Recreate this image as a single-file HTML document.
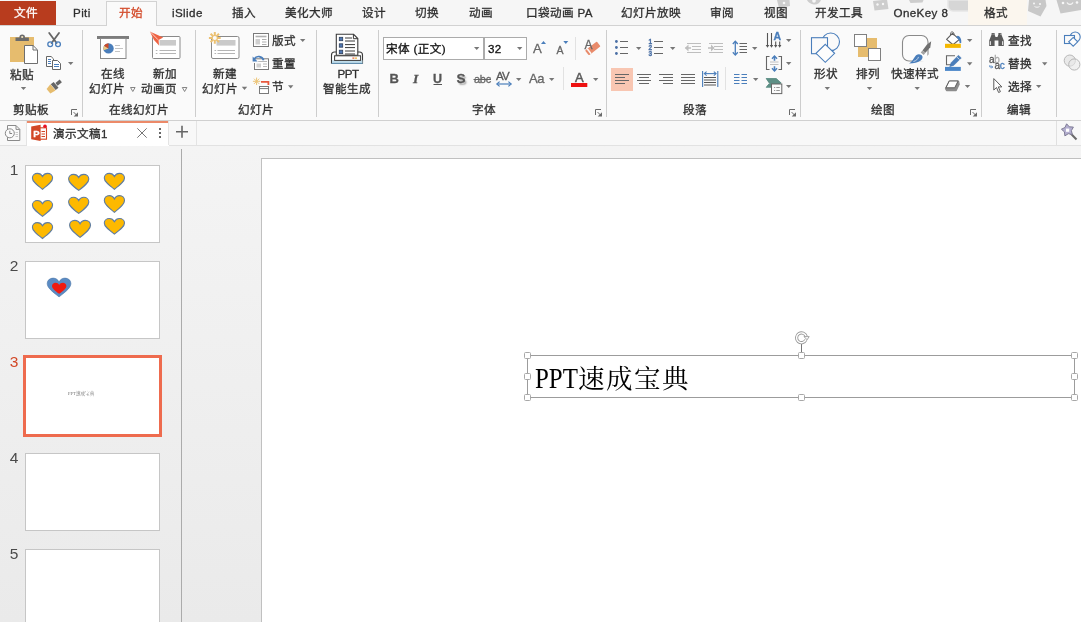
<!DOCTYPE html>
<html lang="zh-CN">
<head>
<meta charset="utf-8">
<title>演示文稿1 - PowerPoint</title>
<style>
*{box-sizing:border-box;margin:0;padding:0}
html,body{width:1081px;height:622px;overflow:hidden}
body{position:relative;font-family:"Liberation Sans","Noto Sans CJK SC",sans-serif;font-size:12px;color:#444;background:#efefef}
.a{position:absolute}
.t{position:absolute;white-space:nowrap;line-height:16px;height:16px;font-size:11.600px;letter-spacing:0.400px;color:#2e2e2e;-webkit-text-stroke:0.300px}
.vs{position:absolute;width:1px;background:#cdcdcd;top:30px;height:87px}
svg{position:absolute;overflow:visible}
#tabs,#rib,#docbar,#thumbs,#tbt{will-change:transform}
#tabs{left:0;top:0;width:1081px;height:26px;background:#f6f6f6;border-bottom:1px solid #d2d2d2;overflow:hidden}
#ribbon{left:0;top:26px;width:1081px;height:95px;background:#fafafa;border-bottom:1px solid #d0d0d0}
#docbar{left:0;top:121px;width:1081px;height:25px;background:#f8f8f8;border-bottom:1px solid #e2e2e2}
#work{left:0;top:146px;width:1081px;height:476px;background:linear-gradient(#f4f4f4,#eaeaea)}
.th{position:absolute;left:25px;width:135px;height:78px;background:#fff;border:1px solid #c6c6c6}
.num{position:absolute;left:8px;width:12px;text-align:center;font-size:15.500px;line-height:16px;color:#4a4a4a}
.h{position:absolute;width:7px;height:7px;background:#fff;border:1px solid #a8a8a8;border-radius:1.5px}
</style>
</head>
<body>
<!-- ================= TAB ROW ================= -->
<div id="tabs" class="a">
  <div id="doodles"><svg width="320" height="25" viewBox="770 0 320 25" style="left:770px;top:0">
    <g fill="#cdcdcd">
      <path d="M777 0h12.500l0.500 6l-11 2z"/>
      <path d="M807 0h14c-1 3-4 5-7 4.500s-6-2-7-4.500z"/>
      <path d="M873 1l14-1.500l1.500 9.500l-14 1.500z"/>
      <path d="M909 0h14.500l-1 2.500l-12 0.500z"/>
      <path d="M948 0h24v11h-19a5 5 0 0 1-5-5z" fill="#d6d6d6" stroke="#e6e6e6" stroke-width="1.500"/>
      <path d="M1029 0h16.500l1 6l-6 10.500l-12.500-5.500z" fill="#c8c8c8"/>
      <path d="M1056.500 0h25v10l-21 3.500z" fill="#c8c8c8"/>
    </g>
    <g fill="#f7f7f7">
      <circle cx="784" cy="3" r="1.300"/><circle cx="814" cy="1" r="1.800"/>
      <circle cx="877.500" cy="4.500" r="1.200"/><circle cx="883" cy="4" r="1.200"/>
      <circle cx="1034" cy="3.500" r="1"/><circle cx="1040" cy="4" r="1"/>
      <circle cx="1063" cy="3" r="1.300"/><circle cx="1077" cy="2.500" r="1.300"/>
    </g>
    <path d="M1067 2.500c1.500 2.500 4.500 2.500 6 0" fill="none" stroke="#f7f7f7" stroke-width="1.300"/>
    <path d="M1034.500 6.500c1.500 1 3.500 1 5 0" fill="none" stroke="#f7f7f7" stroke-width="0.900"/>
  </svg></div>
  <div class="a" style="left:0;top:1px;width:56px;height:25px;background:#b83c1e"></div>
  <span class="t" style="left:14px;top:5px;color:#fff">文件</span>
  <span class="t" style="left:73px;top:5px">Piti</span>
  <span class="t" style="left:172px;top:5px">iSlide</span>
  <span class="t" style="left:232px;top:5px">插入</span>
  <span class="t" style="left:285px;top:5px">美化大师</span>
  <span class="t" style="left:362px;top:5px">设计</span>
  <span class="t" style="left:415px;top:5px">切换</span>
  <span class="t" style="left:469px;top:5px">动画</span>
  <span class="t" style="left:526px;top:5px">口袋动画 PA</span>
  <span class="t" style="left:621px;top:5px">幻灯片放映</span>
  <span class="t" style="left:710px;top:5px">审阅</span>
  <span class="t" style="left:764px;top:5px">视图</span>
  <span class="t" style="left:815px;top:5px">开发工具</span>
  <span class="t" style="left:893.5px;top:5px">OneKey 8</span>
  <div class="a" style="left:968px;top:0;width:59px;height:25px;background:#fbf6ee"></div>
  <span class="t" style="left:984px;top:5px">格式</span>
</div>
<div class="a" style="left:106px;top:1px;width:51px;height:26px;background:#fafafa;border:1px solid #d2d2d2;border-bottom:none"></div>
<span class="t" style="left:119px;top:5px;color:#d24726;will-change:transform">开始</span>

<!-- ================= RIBBON ================= -->
<div id="ribbon" class="a"></div>
<div id="rib" class="a" style="left:0;top:0;width:1081px;height:121px">
  <div class="a" style="left:383px;top:37px;width:101px;height:23px;background:#fff;border:1px solid #ababab"></div>
  <div class="a" style="left:484px;top:37px;width:43px;height:23px;background:#fff;border:1px solid #ababab"></div>
  <div class="a" style="left:611px;top:68px;width:22px;height:23px;background:#f8c6b2"></div>

<svg id="ico1" width="400" height="121" viewBox="0 0 400 121" style="left:0;top:0">
  <path d="M20.8 87h5.4l-2.700 3.100z" fill="#777"/><path d="M68 62h5.4l-2.700 3.100z" fill="#777"/><path d="M241.8 86.8h5.4l-2.700 3.100z" fill="#777"/><path d="M300 39h5.4l-2.700 3.100z" fill="#777"/><path d="M288 85.3h5.4l-2.700 3.100z" fill="#777"/>
  <!-- paste -->
  <rect x="10" y="37" width="24" height="25" fill="#e6bc6e"/>
  <path d="M15.5 41v-3.6h3.9a2.8 2.8 0 0 1 5.6 0h3.9V41z" fill="#6b6b6b"/>
  <circle cx="22.2" cy="37" r="1.1" fill="#f4e3bf"/>
  <path d="M24.5 45.5h8.6l4.4 4.4v13.6h-13z" fill="#fff" stroke="#6f6f6f"/>
  <path d="M33 45.6v4.4h4.4" fill="none" stroke="#6f6f6f"/>
  <!-- scissors -->
  <path d="M49.200 33l7.400 10M59 33l-7.400 10" stroke="#666" stroke-width="1.800" fill="none" stroke-linecap="round"/>
  <circle cx="50.200" cy="44.200" r="2.400" fill="none" stroke="#4a7ebb" stroke-width="1.300"/>
  <circle cx="58" cy="44.200" r="2.400" fill="none" stroke="#4a7ebb" stroke-width="1.300"/>
  <!-- copy -->
  <path d="M46.5 56.5h4.6l2.4 2.4v7.6h-7z" fill="#fff" stroke="#666"/>
  <path d="M52.5 60.5h5l3 3v6h-8z" fill="#fff" stroke="#666"/>
  <path d="M48 59.5h3M48 61.5h3M48 63.5h3M54 64.5h5M54 66.5h5" stroke="#4a7ebb" stroke-width="1"/>
  <!-- format painter -->
  <g transform="translate(55 85.700) rotate(-40) scale(0.900)">
    <path d="M-9.5 -3.2l6.5 -1.3v9l-6.5 -1.3z" fill="#e6bc6e"/>
    <rect x="-2.6" y="-4.2" width="4.2" height="8.4" fill="#666"/>
    <rect x="2.2" y="-1.9" width="6.2" height="3.8" fill="#666"/>
  </g>
  <!-- dialog launcher clipboard -->
  <path d="M71.5 115v-5.500h5.500" fill="none" stroke="#6a6a6a" stroke-width="1"/><path d="M73.6 112.100l3 3" stroke="#6a6a6a" stroke-width="1"/><path d="M78 112.200v4.300h-4.300z" fill="#6a6a6a"/>

  <!-- online slides icon -->
  <rect x="97" y="36" width="32" height="3" fill="#7c7c7c"/>
  <rect x="100.5" y="38.5" width="25.5" height="20" fill="#fff" stroke="#8a8a8a"/>
  <circle cx="108.5" cy="48.4" r="5.2" fill="#4a7ebb"/>
  <path d="M108.5 48.4L103.6 50.2A5.2 5.2 0 0 1 104 45.8z" fill="#f0c981"/>
  <path d="M108.5 48.4L104 45.8A5.2 5.2 0 0 1 108.5 43.2z" fill="#d04a27"/>
  <path d="M115 45.5h5M115 48.5h8M115 51.5h5" stroke="#c4c4c4" stroke-width="1"/>
  <path d="M130.5 87.5h4.6l-2.3 4z" fill="none" stroke="#777" stroke-width="0.9"/>
  <!-- new animation page icon -->
  <rect x="152.5" y="36.5" width="27.5" height="22" rx="1" fill="#fff" stroke="#8a8a8a"/>
  <rect x="159.5" y="40" width="16.5" height="5.6" fill="#cacaca"/>
  <path d="M159.5 50.5h16.5M159.5 53.5h16.5M155.8 50.5h1.6M155.8 53.5h1.6" stroke="#b5b5b5" stroke-width="1"/>
  <path d="M149.800 31.400L163.200 37.600L158.600 40L159 45.400L154 40z" fill="#ee6242"/>
  <path d="M149.8 31.4l8.2 8.3" stroke="#fff" stroke-width="0.7"/>
  <path d="M182.3 87.5h4.6l-2.3 4z" fill="none" stroke="#777" stroke-width="0.9"/>

  <!-- new slide icon -->
  <rect x="211.5" y="36.5" width="27.5" height="22" rx="1.5" fill="#fff" stroke="#8a8a8a"/>
  <rect x="216.5" y="40" width="19" height="5.6" fill="#cacaca"/>
  <path d="M217.5 50.5h17.5M217.5 53.5h17.5M214.5 50.5h1.6M214.5 53.5h1.6" stroke="#b5b5b5" stroke-width="1"/>
  <g stroke="#ecc172" stroke-width="2" stroke-linecap="butt">
    <path d="M214.8 32v11.8M208.9 37.9h11.8M210.6 33.7l8.4 8.4M219 33.7l-8.4 8.4"/>
  </g>
  <circle cx="214.8" cy="37.9" r="2" fill="#fafafa"/>
  <!-- layout icon -->
  <rect x="253.5" y="33.5" width="15" height="13" fill="#fff" stroke="#7a7a7a"/>
  <path d="M255.5 36.5h11" stroke="#b0b0b0" stroke-width="1.6"/>
  <rect x="255.5" y="39" width="4.5" height="5.5" fill="#cfcfcf"/>
  <path d="M262 39.500h4.500M262 42h4.500M262 44.500h4.500" stroke="#9a9a9a" stroke-width="0.800"/>
  <!-- reset icon -->
  <rect x="254.5" y="58.8" width="14" height="10.7" fill="#fff" stroke="#7a7a7a"/>
  <rect x="256.5" y="63.5" width="4.5" height="4" fill="#cfcfcf"/>
  <path d="M263 64h4M263 66.5h4M258 61.5h9" stroke="#b0b0b0" stroke-width="0.9"/>
  <path d="M252.6 56v5.6h5.6" fill="none" stroke="#fafafa" stroke-width="3"/>
  <path d="M263.6 60.2a5.2 5.2 0 0 0 -9.4 -1.2" fill="none" stroke="#4a7ebb" stroke-width="1.7"/>
  <path d="M252.6 56.4v5h5z" fill="#4a7ebb"/>
  <!-- section icon -->
  <g stroke="#ecc476" stroke-width="1" >
    <path d="M256.6 77.6v7.4M252.9 81.3h7.4M254 78.7l5.2 5.2M259.2 78.7l-5.2 5.2"/>
  </g>
  <path d="M261 81.8h7.4v3.2" fill="none" stroke="#e8573c" stroke-width="1.8"/>
  <rect x="259.5" y="86.5" width="9" height="7" fill="#fff" stroke="#7a7a7a"/>
  <path d="M260 88.6h8" stroke="#7a7a7a" stroke-width="1"/>

  <!-- PPT AI icon -->
  <path d="M331.5 63.2v-8.2a3 3 0 0 1 3 -3h25a3 3 0 0 1 3 3v8.2z" fill="#fff" stroke="#3a3a3a" stroke-width="1.1"/>
  <path d="M332 60.3h30.5v3h-30.5z" fill="#bfdcea"/>
  <path d="M331.5 63.4h31" stroke="#5f8fb0" stroke-width="1"/>
  <path d="M336.3 55.3v-21h17.3l4.2 4.2v16.8z" fill="#fff" stroke="#3a3a3a" stroke-width="1.1"/>
  <path d="M353.4 34.4v4.3h4.3" fill="none" stroke="#3a3a3a" stroke-width="1"/>
  <rect x="334.6" y="55.8" width="26" height="4.6" fill="#fff" stroke="#3a3a3a" stroke-width="1"/>
  <rect x="339.3" y="37.3" width="3.4" height="3.4" fill="#4f78b3" stroke="#2e3f5c" stroke-width="0.8"/>
  <rect x="339.3" y="43.8" width="3.4" height="3.4" fill="#4f78b3" stroke="#2e3f5c" stroke-width="0.8"/>
  <rect x="339.3" y="50.2" width="3.4" height="3.4" fill="#4f78b3" stroke="#2e3f5c" stroke-width="0.8"/>
  <path d="M345 38h7M345 41h10M345 44.6h10M345 47.6h10M345 51h10M345 54h10" stroke="#3a3a3a" stroke-width="1"/>
  <path d="M352.4 58.1h2" stroke="#e9663a" stroke-width="1.3"/>
  <path d="M355 58.1h2" stroke="#f0b93a" stroke-width="1.3"/>
</svg>

<svg id="ico2" width="1081" height="121" viewBox="0 0 1081 121" style="left:0;top:0">
  <!-- font combos arrows -->
  <path d="M474 47h5.4l-2.7 3.1z" fill="#777"/><path d="M517 47h5.4l-2.7 3.1z" fill="#777"/>
  <!-- grow / shrink triangles -->
  <path d="M541 43.9l2.5-3l2.5 3z" fill="#4a7ebb"/>
  <path d="M563.3 41h5l-2.5 3z" fill="#4a7ebb"/>
  <!-- small separators -->
  <path d="M575.5 37v23M563.5 67v23M725.5 67v23" stroke="#e2e2e2" stroke-width="1"/>
  <!-- clear formatting eraser -->
  <g transform="translate(592.800 48.400) rotate(-38)">
    <rect x="-7.400" y="-3.100" width="14.800" height="6.200" rx="0.800" fill="#e98b6b"/>
    <rect x="-5.400" y="-3.100" width="1.500" height="6.200" fill="#fafafa"/>
  </g>
  <!-- strike for abc, underline for U, AV arrows -->
  <path d="M473.5 79.5h17.5" stroke="#666" stroke-width="1"/>
  <path d="M433.5 84.5h8.5" stroke="#555" stroke-width="1"/>
  <path d="M497.5 84h13" stroke="#4a7ebb" stroke-width="1.2"/>
  <path d="M499.6 81.6l-2.8 2.4l2.8 2.4M508.4 81.6l2.8 2.4l-2.8 2.4" fill="none" stroke="#4a7ebb" stroke-width="1.2"/>
  <path d="M516 78h5.4l-2.7 3.1z" fill="#777"/><path d="M549 78h5.4l-2.7 3.1z" fill="#777"/><path d="M593 78h5.4l-2.7 3.1z" fill="#777"/>
  <!-- font colour bar -->
  <rect x="571" y="83" width="16.3" height="4" fill="#ee1111"/>
  <!-- dialog launchers -->
  <path d="M595.5 115v-5.500h5.500" fill="none" stroke="#6a6a6a" stroke-width="1"/><path d="M597.6 112.100l3 3" stroke="#6a6a6a" stroke-width="1"/><path d="M602 112.200v4.300h-4.300z" fill="#6a6a6a"/>
  <path d="M789.5 115v-5.500h5.500" fill="none" stroke="#6a6a6a" stroke-width="1"/><path d="M791.6 112.100l3 3" stroke="#6a6a6a" stroke-width="1"/><path d="M796 112.200v4.300h-4.300z" fill="#6a6a6a"/>
  <path d="M970.5 115v-5.500h5.500" fill="none" stroke="#6a6a6a" stroke-width="1"/><path d="M972.6 112.100l3 3" stroke="#6a6a6a" stroke-width="1"/><path d="M977 112.200v4.300h-4.300z" fill="#6a6a6a"/>

  <!-- bullets -->
  <g fill="#4a6fa5"><circle cx="616.4" cy="41.5" r="1.4"/><circle cx="616.4" cy="47.5" r="1.4"/><circle cx="616.4" cy="53.5" r="1.4"/></g>
  <path d="M620 41.5h8M620 47.5h8M620 53.5h8" stroke="#666" stroke-width="1.1"/>
  <path d="M636 47h5.4l-2.7 3.1z" fill="#777"/>
  <!-- numbering lines -->
  <path d="M654 41.5h9M654 47.5h9M654 53.5h9" stroke="#666" stroke-width="1.1"/>
  <path d="M670 47h5.4l-2.7 3.1z" fill="#777"/>
  <!-- decrease / increase indent (disabled) -->
  <g stroke="#bebebe" stroke-width="1.100" fill="none">
    <path d="M687 43.5h14M692 46.5h9M692 49.5h9M687 52.5h14"/>
    <path d="M709 43.5h14M714 46.5h9M714 49.5h9M709 52.5h14"/>
    <path d="M685.5 48h5.5M708 48h5.5" stroke-width="1.4"/>
  </g>
  <path d="M688.500 44.600l-3.700 3.400l3.700 3.400z" fill="#bebebe"/>
  <path d="M711 44.600l3.700 3.400l-3.700 3.400z" fill="#bebebe"/>
  <!-- line spacing -->
  <path d="M735.3 41.8v12.600" stroke="#4a7ebb" stroke-width="1.3"/>
  <path d="M732.8 44l2.500-2.800l2.500 2.800M732.800 52.300l2.500 2.800l2.500-2.800" fill="none" stroke="#4a7ebb" stroke-width="1.3"/>
  <path d="M739.5 43.5h7.5M739.5 46.5h7.5M739.5 49.5h7.5M739.5 52.5h7.5" stroke="#666" stroke-width="1.1"/>
  <path d="M752 47h5.4l-2.7 3.1z" fill="#777"/>
  <!-- align buttons -->
  <g stroke="#666" stroke-width="1.1">
    <path d="M615 74.5h14M615 77.5h10M615 80.5h14M615 83.5h10"/>
    <path d="M637 74.5h14M639 77.5h10M637 80.5h14M639 83.5h10"/>
    <path d="M659 74.5h14M663 77.5h10M659 80.5h14M663 83.5h10"/>
    <path d="M681 74.5h14M681 77.5h14M681 80.5h14M681 83.5h14"/>
    <path d="M704 77.500h12M704 80h12M704 82.500h12M704 85h12" stroke="#555" stroke-width="1.200"/>
  </g>
  <path d="M702.6 71v16M717.8 71v16" stroke="#4a7ebb" stroke-width="1.1"/>
  <path d="M704.5 73.6h11.5" stroke="#4a7ebb" stroke-width="1.1"/>
  <path d="M706.6 71.6l-2.3 2l2.3 2M713.8 71.600l2.300 2l-2.300 2" fill="none" stroke="#4a7ebb" stroke-width="1.1"/>
  <!-- columns -->
  <path d="M734 74.500h5.500M734 77.500h5.500M734 80.500h5.500M734 83.500h5.500M741.500 74.500h5.500M741.500 77.500h5.500M741.500 80.500h5.500M741.500 83.500h5.500" stroke="#4a7ebb" stroke-width="1.1"/>
  <path d="M753 78h5.4l-2.7 3.1z" fill="#777"/>
  <!-- text direction -->
  <path d="M767.500 33v13M771.500 33v13M775.700 41.500v4.500M779.700 41.500v4.500" stroke="#555" stroke-width="1.1"/>
  <path d="M765.700 45l1.800 2.800l1.800-2.800zM769.700 45l1.800 2.800l1.800-2.800zM774 45l1.700 2.800l1.700-2.800zM778 45l1.700 2.800l1.700-2.800z" fill="#555"/>
  <path d="M786 39h5.4l-2.7 3.1z" fill="#777"/>
  <!-- align text -->
  <path d="M769.500 56.500h-3v13h3M778.500 56.500h3v13h-3" fill="none" stroke="#666" stroke-width="1.1"/>
  <path d="M770 62h8.500M770 64.500h8.500" stroke="#b9b9b9" stroke-width="0.9"/>
  <path d="M774.500 56.500v4.300M774.500 66.200v4.300" stroke="#4a7ebb" stroke-width="1.600"/>
  <path d="M772 58.700l2.500-2.700l2.500 2.700M772 68.300l2.500 2.700l2.500-2.700" fill="none" stroke="#4a7ebb" stroke-width="1.500"/>
  <path d="M786 62h5.4l-2.7 3.1z" fill="#777"/>
  <!-- smartart -->
  <path d="M765.700 78.200h10.500l5.300 4.800h-12l-3.800 4.600h5.300v-1z" fill="#5d8f85"/>
  <path d="M765.700 78.200h10.500l5.200 4.700l-5.200 4.700h-10.500l4 -4.700z" fill="#5d8f85"/>
  <rect x="771.500" y="84" width="10.300" height="9.600" fill="#fafafa" stroke="#666" stroke-width="1"/>
  <path d="M774 87.500h1.200M776.300 87.500h3.500M774 90.500h1.200M776.300 90.500h3.500" stroke="#8a8a8a" stroke-width="0.9"/>
  <path d="M786 85h5.4l-2.7 3.1z" fill="#777"/>

  <!-- shapes big icon -->
  <circle cx="830.700" cy="41.800" r="8.800" fill="none" stroke="#4a7ebb" stroke-width="1.1"/>
  <rect x="811.500" y="37.700" width="16" height="16" fill="#fafafa" stroke="#4a7ebb" stroke-width="1.100"/>
  <path d="M825.300 44.300l9.300 9l-9.300 9l-9.300-9z" fill="#fdfdfd" stroke="#4a7ebb" stroke-width="1.100"/>
  <path d="M824.6 87h5.4l-2.7 3.1z" fill="#777"/>
  <!-- arrange -->
  <path d="M867 38h10v12h-8v7h-11v-10h9z" fill="#e6bc6e"/>
  <rect x="854.500" y="34.500" width="12" height="12" fill="#fff" stroke="#808080"/>
  <rect x="868.500" y="48.500" width="12" height="12" fill="#fff" stroke="#808080"/>
  <path d="M866.8 87h5.4l-2.7 3.1z" fill="#777"/>
  <!-- quick styles -->
  <rect x="902.500" y="35.500" width="25.500" height="25.500" rx="6.500" fill="#fcfcfc" stroke="#8a8a8a" stroke-width="1.1"/>
  <path d="M918 61.800h12v-8z" fill="#fafafa"/>
  <path d="M931.200 41.200L930.300 47.200L925.500 52.800L922.500 50.400L926.800 44.800z" fill="#707070"/>
  <path d="M922.500 50.400L925.500 52.800L923.700 55L920.700 52.600z" fill="#a2a2a2"/>
  <path d="M922.400 56.200c1 3.300-3.200 7-13.300 7.300c4-2.200 4.600-6 7-8.200c2.200-1.700 5-1.200 6.300 0.900z" fill="#4a7ebb"/>
  <path d="M913.500 61.500c2.800-0.800 4.400-2.400 5-4.600" fill="none" stroke="#dfe9f5" stroke-width="0.800"/>
  <path d="M914.500 87h5.400l-2.700 3.100z" fill="#777"/>
  <!-- shape fill -->
  <path d="M952.400 33.400l7 6l-6.400 5.400l-6.400-5.400z" fill="#fff" stroke="#606060" stroke-width="1.200" stroke-linejoin="round"/>
  <path d="M950.600 35c-0.600-2.200 0.600-3.300 1.800-3.100s1.800 1.500 1.600 3.500" fill="none" stroke="#606060" stroke-width="1"/>
  <path d="M957.600 35.800c2.600 0.600 4.200 3.400 3.600 7.200l-1.600 0.200c0.200-2.200-0.800-4-3.400-6z" fill="#4a7ebb"/>
  <rect x="945" y="43.800" width="15.800" height="4.100" fill="#f5b800"/>
  <path d="M967 39h5.4l-2.7 3.1z" fill="#777"/>
  <!-- shape outline -->
  <path d="M955 55.800h-8.500v9h4.500" fill="none" stroke="#666" stroke-width="1.100"/>
  <path d="M958.400 55.300l2.900 2.600l-7.600 7.600l-4 1.300l1.300-4z" fill="#4a7ebb" stroke="#3f6ea8" stroke-width="0.400"/><path d="M956.800 57l2.800 2.600" stroke="#fafafa" stroke-width="0.700"/>
  <rect x="945" y="66.900" width="15.800" height="4" fill="#4a86c8"/>
  <path d="M967 62.3h5.4l-2.7 3.1z" fill="#777"/>
  <!-- shape effects -->
  <path d="M945.600 88.600l3.600-7.300h9.300l0.600 3l-3 6.200h-9.500z" fill="#8c8c8c" stroke="#8c8c8c" stroke-width="1.400" stroke-linejoin="round"/>
  <path d="M949.300 81h8.800l-3.400 6.800h-8.800z" fill="#fff" stroke="#5f5f5f" stroke-width="1" stroke-linejoin="round"/>
  <path d="M964.800 85h5.400l-2.700 3.100z" fill="#777"/>
  <!-- find: binoculars -->
  <path d="M989.200 46v-5.600l2.400-6v-1.400h3v1.400l0.900 2.600h2l0.900-2.600v-1.400h3v1.400l2.400 6v5.600h-5.400v-5.400h-3.800v5.400z" fill="#5a5a5a"/>
  <path d="M990.400 41.200v3.800M1002.600 41.200v3.800" stroke="#fafafa" stroke-width="0.900"/>
  <path d="M992.600 34.200h1M1000.200 34.200h1" stroke="#d8d8d8" stroke-width="0.800"/>
  <!-- replace arrow -->
  <path d="M989.800 65.200v1.800h2.600M991.300 65.600l1.400 1.400l-1.400 1.400" fill="none" stroke="#4a7ebb" stroke-width="0.900"/>
  <path d="M1042 62.3h5.4l-2.7 3.1z" fill="#777"/>
  <!-- select cursor -->
  <path d="M993.800 78.600v11.400l2.700-2.500l2.100 5l1.800-0.800l-2.100-4.800h3.600z" fill="#fff" stroke="#5a5a5a" stroke-width="1"/>
  <path d="M1036 85h5.4l-2.7 3.1z" fill="#777"/>

  <!-- right-edge partially visible icons -->
  <circle cx="1075.200" cy="37" r="5" fill="none" stroke="#4a7ebb" stroke-width="1.100"/>
  <rect x="1064.500" y="35.500" width="10" height="8" fill="#fafafa" stroke="#4a7ebb" stroke-width="1.100"/>
  <path d="M1073.200 37.400l4.500 4.400l-4.500 4.400l-4.500-4.400z" fill="#fdfdfd" stroke="#4a7ebb" stroke-width="1.100"/>
  <circle cx="1069.800" cy="60.600" r="5.600" fill="#e9e9e9" stroke="#b6b6b6" stroke-width="1"/>
  <circle cx="1074.300" cy="64.500" r="5.600" fill="#e9e9e9" fill-opacity="0.600" stroke="#b6b6b6" stroke-width="1"/>
</svg>
  <!-- clipboard group -->
  <span class="t" style="left:10px;top:67px">粘贴</span>
  <span class="t" style="left:13px;top:102px">剪贴板</span>
  <div class="vs" style="left:82px"></div>
  <!-- online slides group -->
  <span class="t" style="left:101px;top:66px">在线</span>
  <span class="t" style="left:89px;top:81px">幻灯片</span>
  <span class="t" style="left:153px;top:66px">新加</span>
  <span class="t" style="left:141px;top:81px">动画页</span>
  <span class="t" style="left:109px;top:102px">在线幻灯片</span>
  <div class="vs" style="left:195px"></div>
  <!-- slides group -->
  <span class="t" style="left:213px;top:66px">新建</span>
  <span class="t" style="left:202px;top:81px">幻灯片</span>
  <span class="t" style="left:272px;top:33px">版式</span>
  <span class="t" style="left:272px;top:56px">重置</span>
  <span class="t" style="left:272px;top:79px">节</span>
  <span class="t" style="left:238px;top:102px">幻灯片</span>
  <div class="vs" style="left:316px"></div>
  <!-- PPT AI -->
  <span class="t" style="left:337.500px;top:66px;letter-spacing:-0.500px">PPT</span>
  <span class="t" style="left:323px;top:81px">智能生成</span>
  <div class="vs" style="left:378px"></div>
  <!-- font group -->
  <span class="t" style="left:386px;top:41px;color:#111">宋体 (正文)</span>
  <span class="t" style="left:488px;top:41px;color:#111">32</span>
  <span class="t" style="left:533px;top:40.500px;font-size:13.200px;color:#666;-webkit-text-stroke:0.3px">A</span>
  <span class="t" style="left:556.500px;top:41.600px;font-size:10.500px;color:#666;-webkit-text-stroke:0.3px">A</span>
  <span class="t" style="left:584.500px;top:37px;font-size:12px;color:#666;-webkit-text-stroke:0.3px">A</span>
  <span class="t" style="left:389.5px;top:70.500px;font-size:13px;font-weight:bold;color:#555">B</span>
  <span class="t" style="left:413px;top:70.500px;font-size:13.500px;font-style:italic;font-weight:bold;color:#555;font-family:'Liberation Serif',serif">I</span>
  <span class="t" style="left:433px;top:70.500px;font-size:12.500px;font-weight:bold;color:#555">U</span>
  <span class="t" style="left:456.5px;top:70.500px;font-size:13.500px;font-weight:bold;color:#555;text-shadow:1.5px 1.500px 1.500px #aaa">S</span>
  <span class="t" style="left:474px;top:71px;font-size:11px;letter-spacing:-0.3px;color:#666;-webkit-text-stroke:0.3px">abc</span>
  <span class="t" style="left:496px;top:68px;font-size:11.500px;letter-spacing:-0.800px;color:#555;-webkit-text-stroke:0.3px">AV</span>
  <span class="t" style="left:529px;top:70.500px;font-size:13px;letter-spacing:-0.300px;color:#666;-webkit-text-stroke:0.3px">Aa</span>
  <span class="t" style="left:575px;top:70.300px;font-size:13px;color:#5a5a5a;-webkit-text-stroke:0.500px">A</span>
  <span class="t" style="left:472px;top:102px">字体</span>
  <span class="t" style="left:648.5px;top:38.500px;font-size:6.500px;font-weight:bold;color:#4a6fa5;line-height:6px;height:auto;white-space:pre-line">1
2
3</span>
  <span class="t" style="left:773.5px;top:28px;font-size:10.500px;font-weight:bold;color:#4a7ebb">A</span>
  <span class="t" style="left:989px;top:51.500px;font-size:10px;color:#555;letter-spacing:-0.300px;-webkit-text-stroke:0.3px">a<span style="color:#aaa">b</span></span>
  <span class="t" style="left:994.600px;top:58px;font-size:10px;color:#555;letter-spacing:-0.300px;-webkit-text-stroke:0.3px">a<span style="color:#4a7ebb">c</span></span>
  <div class="vs" style="left:606px"></div>
  <!-- paragraph group -->
  <span class="t" style="left:683px;top:102px">段落</span>
  <div class="vs" style="left:800px"></div>
  <!-- drawing group -->
  <span class="t" style="left:814px;top:66px">形状</span>
  <span class="t" style="left:856px;top:66px">排列</span>
  <span class="t" style="left:891px;top:66px">快速样式</span>
  <span class="t" style="left:871px;top:102px">绘图</span>
  <div class="vs" style="left:981px"></div>
  <!-- editing group -->
  <span class="t" style="left:1008px;top:33px">查找</span>
  <span class="t" style="left:1008px;top:56px">替换</span>
  <span class="t" style="left:1008px;top:79px">选择</span>
  <span class="t" style="left:1007px;top:102px">编辑</span>
  <div class="vs" style="left:1056px"></div>
</div>

<!-- ================= DOC TAB BAR ================= -->
<div id="docbar" class="a">
  <div class="a" style="left:27px;top:0;width:142px;height:25px;background:#fff;border-top:2px solid #ec8a69"></div>
  <span class="t" style="left:53px;top:5px">演示文稿1</span>
  <svg width="200" height="25" viewBox="0 121 200 25" style="left:0;top:0">
    <!-- history/recent icon -->
    <path d="M7.500 125.500h8.500l3.800 3.800v11.200h-12.300z" fill="#fbfbfb" stroke="#8a8a8a" stroke-width="1"/>
    <path d="M16 125.600v3.800h3.700" fill="none" stroke="#8a8a8a" stroke-width="1"/>
    <path d="M15.500 132.500h2.500M15.500 134.500h2.500M15.500 136.500h2.500" stroke="#c4c4c4" stroke-width="0.900"/>
    <circle cx="9.800" cy="133.300" r="4.500" fill="#fbfbfb" stroke="#8a8a8a" stroke-width="1"/>
    <path d="M9.800 130.800v2.700h2.300" fill="none" stroke="#777" stroke-width="0.900"/>
    <!-- powerpoint icon -->
    <rect x="38.500" y="127.800" width="8" height="11.400" fill="#fff" stroke="#d24726" stroke-width="1.100"/>
    <path d="M41.500 131.500h3.500M41.500 134h3.500M41.500 136.500h3.500" stroke="#d24726" stroke-width="1.100"/>
    <path d="M31.200 126.600l9.400-1.800v16.200l-9.400-1.800z" fill="#d24726"/>
    <circle cx="45" cy="126.300" r="1.800" fill="#e81123"/>
    <!-- close x -->
    <path d="M137.300 128.300l9.400 9.400M146.700 128.300l-9.400 9.400" stroke="#777" stroke-width="1"/>
    <!-- kebab -->
    <rect x="159" y="128" width="2" height="2" fill="#666"/><rect x="159" y="132" width="2" height="2" fill="#666"/><rect x="159" y="136" width="2" height="2" fill="#666"/>
    <!-- plus -->
    <path d="M176 131.800h12M182 125.800v12" stroke="#666" stroke-width="1.600"/>
    <path d="M26.500 121v24M168.500 121v24M196.500 121v24" stroke="#e4e4e4" stroke-width="1"/>
  </svg>
  <span class="t" style="left:33.200px;top:4.5px;font-size:9.500px;font-weight:bold;color:#fff">P</span>

  <div class="a" style="left:1056px;top:0;width:1px;height:24px;background:#e0e0e0"></div>
  <svg width="20" height="25" viewBox="1060 121 20 25" style="left:1060px;top:0">
    <path d="M1070.500 133.200l6 6.300" stroke="#6a6a6a" stroke-width="2"/>
    <path d="M1066.6 123.8L1069.3 126.8L1073.4 127.1L1071.4 130.6L1072.3 134.5L1068.3 133.7L1064.9 135.9L1064.4 131.8L1061.4 129.2L1065.0 127.5z" fill="#b4afd0" stroke="#7f7c96" stroke-width="1" stroke-linejoin="round"/>
    <rect x="1066" y="128.600" width="3.200" height="3.200" fill="#fff"/>
  </svg>

</div>

<!-- ================= WORK AREA ================= -->
<div id="work" class="a">
  <div class="a" style="left:181px;top:3px;width:1px;height:473px;background:#ababab"></div>
  <div class="a" style="left:261px;top:12px;width:830px;height:470px;background:#fff;border:1px solid #c0c0c0"></div>
</div>
<!-- thumbnails -->
<div id="thumbs" class="a" style="left:0;top:0;width:181px;height:622px;overflow:hidden">
  <span class="num" style="top:162px">1</span>
  <div class="th" style="top:165px"></div>
  <span class="num" style="top:258px">2</span>
  <div class="th" style="top:261px"></div>
<svg width="181" height="350" viewBox="0 0 181 350" style="left:0;top:0">
  <path transform="translate(32.4 173.4) scale(1.010 0.964)" d="M10 16.500C3.500 11.300 0 8.200 0 4.700C0 2 2.200 0 5 0C7.200 0 9 1.300 10 3.300C11 1.300 12.800 0 15 0C17.800 0 20 2 20 4.700C20 8.200 16.500 11.300 10 16.500Z" fill="#fdb900" stroke="#5f7da3" stroke-width="1.1"/>
  <path transform="translate(68.6 174.4) scale(1.010 0.970)" d="M10 16.500C3.500 11.300 0 8.200 0 4.700C0 2 2.200 0 5 0C7.200 0 9 1.300 10 3.300C11 1.300 12.800 0 15 0C17.800 0 20 2 20 4.700C20 8.200 16.500 11.300 10 16.500Z" fill="#fdb900" stroke="#5f7da3" stroke-width="1.1"/>
  <path transform="translate(104.3 173.4) scale(1.010 0.964)" d="M10 16.500C3.500 11.300 0 8.200 0 4.700C0 2 2.200 0 5 0C7.200 0 9 1.300 10 3.300C11 1.300 12.800 0 15 0C17.800 0 20 2 20 4.700C20 8.200 16.500 11.300 10 16.500Z" fill="#fdb900" stroke="#5f7da3" stroke-width="1.1"/>
  <path transform="translate(32.4 200.5) scale(1.010 0.958)" d="M10 16.500C3.500 11.300 0 8.200 0 4.700C0 2 2.200 0 5 0C7.200 0 9 1.300 10 3.300C11 1.300 12.800 0 15 0C17.800 0 20 2 20 4.700C20 8.200 16.500 11.300 10 16.500Z" fill="#fdb900" stroke="#5f7da3" stroke-width="1.1"/>
  <path transform="translate(68.6 197.3) scale(1.010 0.976)" d="M10 16.500C3.500 11.300 0 8.200 0 4.700C0 2 2.200 0 5 0C7.200 0 9 1.300 10 3.300C11 1.300 12.800 0 15 0C17.800 0 20 2 20 4.700C20 8.200 16.500 11.300 10 16.500Z" fill="#fdb900" stroke="#5f7da3" stroke-width="1.1"/>
  <path transform="translate(104.3 195.6) scale(1.010 1.018)" d="M10 16.500C3.500 11.300 0 8.200 0 4.700C0 2 2.200 0 5 0C7.200 0 9 1.300 10 3.300C11 1.300 12.800 0 15 0C17.800 0 20 2 20 4.700C20 8.200 16.500 11.300 10 16.500Z" fill="#fdb900" stroke="#5f7da3" stroke-width="1.1"/>
  <path transform="translate(32.4 222.6) scale(1.010 0.964)" d="M10 16.500C3.500 11.300 0 8.200 0 4.700C0 2 2.200 0 5 0C7.200 0 9 1.300 10 3.300C11 1.300 12.800 0 15 0C17.800 0 20 2 20 4.700C20 8.200 16.500 11.300 10 16.500Z" fill="#fdb900" stroke="#5f7da3" stroke-width="1.1"/>
  <path transform="translate(69.6 220.4) scale(1.045 1.030)" d="M10 16.500C3.500 11.300 0 8.200 0 4.700C0 2 2.200 0 5 0C7.200 0 9 1.300 10 3.300C11 1.300 12.800 0 15 0C17.800 0 20 2 20 4.700C20 8.200 16.500 11.300 10 16.500Z" fill="#fdb900" stroke="#5f7da3" stroke-width="1.1"/>
  <path transform="translate(104.3 218.6) scale(1.010 0.939)" d="M10 16.500C3.500 11.300 0 8.200 0 4.700C0 2 2.200 0 5 0C7.200 0 9 1.300 10 3.300C11 1.300 12.800 0 15 0C17.800 0 20 2 20 4.700C20 8.200 16.500 11.300 10 16.500Z" fill="#fdb900" stroke="#5f7da3" stroke-width="1.1"/>
  <path transform="translate(47.2 278.100) scale(1.185 1.139)" d="M10 16.500C3.500 11.300 0 8.200 0 4.700C0 2 2.200 0 5 0C7.200 0 9 1.300 10 3.300C11 1.300 12.800 0 15 0C17.800 0 20 2 20 4.700C20 8.200 16.500 11.300 10 16.500Z" fill="#5a8bc4" stroke="#4f7aa8" stroke-width="0.500"/>
  <path transform="translate(52 282.800) scale(0.720 0.667)" d="M10 16.500C3.500 11.300 0 8.200 0 4.700C0 2 2.200 0 5 0C7.200 0 9 1.300 10 3.300C11 1.300 12.800 0 15 0C17.800 0 20 2 20 4.700C20 8.200 16.500 11.300 10 16.500Z" fill="#f01a10"/>
</svg>
  <span class="num" style="top:354px;color:#d24726">3</span>
  <div class="a" style="left:23px;top:355px;width:139px;height:82px;background:#fff;border:3px solid #ee6b4e"></div>
  <span class="a" style="left:68px;top:390.600px;font-family:'Liberation Serif','Noto Serif CJK SC',serif;font-size:4.600px;line-height:6px;color:#777;white-space:nowrap">PPT速成宝典</span>
  <span class="num" style="top:450px">4</span>
  <div class="th" style="top:453px"></div>
  <span class="num" style="top:546px">5</span>
  <div class="th" style="top:549px"></div>
</div>

<!-- ================= SLIDE TEXT BOX ================= -->
<div id="tb" class="a" style="left:527px;top:355px;width:548px;height:43px;border:1px solid #9c9c9c"></div>
<div id="tbt" class="a" style="left:535px;top:358px;height:40px;line-height:40px;font-size:26.500px;letter-spacing:1.500px;color:#000;white-space:nowrap;font-family:'Liberation Serif','Noto Serif CJK SC',serif"><span style="display:inline-block;width:43px;font-size:30px;letter-spacing:0;transform:scaleX(0.830);transform-origin:0 50%">PPT</span>速成宝典</div>
<svg width="20" height="24" viewBox="791 330 20 24" style="left:791px;top:330px">
  <path d="M801.500 343.500v9" stroke="#777" stroke-width="1"/>
  <path d="M805.900 339.900a4.900 4.900 0 1 1 0.300-3.400" fill="none" stroke="#9a9a9a" stroke-width="3.200"/>
  <path d="M805.900 339.900a4.900 4.900 0 1 1 0.300-3.400" fill="none" stroke="#fff" stroke-width="1.400"/>
  <path d="M804 336.600h5.200l-2.100 3.200z" fill="#fff" stroke="#9a9a9a" stroke-width="0.900"/>
</svg>
<div class="h" style="left:524px;top:352px"></div>
<div class="h" style="left:798px;top:352px"></div>
<div class="h" style="left:1071px;top:352px"></div>
<div class="h" style="left:524px;top:373px"></div>
<div class="h" style="left:1071px;top:373px"></div>
<div class="h" style="left:524px;top:394px"></div>
<div class="h" style="left:798px;top:394px"></div>
<div class="h" style="left:1071px;top:394px"></div>
</body>
</html>
